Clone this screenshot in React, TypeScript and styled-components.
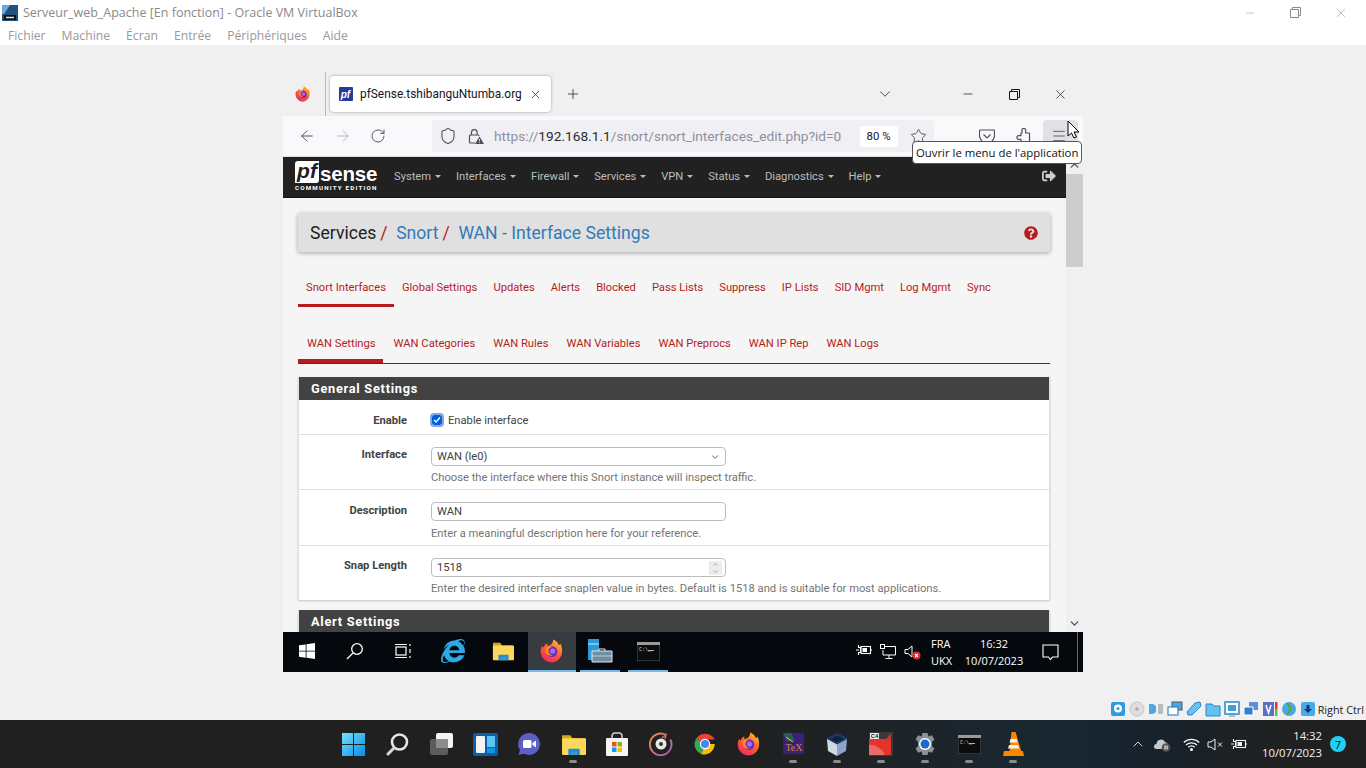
import styled, { createGlobalStyle } from 'styled-components'
import { ArrowLeft, ArrowRight, ChevronDown, ChevronUp, Menu, Minus, Plus, RotateCw, Shield, Star, X } from 'lucide-react'
import { FaSignOutAlt, FaQuestionCircle, FaInternetExplorer } from 'react-icons/fa'

const GlobalStyle = createGlobalStyle`
  html, body { margin: 0; padding: 0; }
  body { background: #f0f0f0; font-family: Roboto, "Liberation Sans", sans-serif; overflow: hidden; }
  * { box-sizing: border-box; }
`

const Screen = styled.div`
  width: 1366px;
  height: 768px;
  display: flex;
  flex-direction: column;
  position: relative;
  overflow: hidden;
`

/* ---- VirtualBox window chrome ---- */
const TitleBar = styled.div`
  height: 23px;
  padding: 2px 0 0 2px;
  background: #fff;
  display: flex;
  align-items: center;
  gap: 5px;
  color: #8a8a8a;
  font: 12.5px "Open Sans", "Noto Sans", sans-serif;
`
const TitleText = styled.span`
  flex: 1;
  white-space: nowrap;
`
const HostControls = styled.div`
  display: flex;
  align-items: center;
  gap: 33.5px;
  padding-right: 18px;
  color: #8a8a8a;
`
const MenuBar = styled.div`
  height: 22px;
  padding: 2px 0 0 8px;
  background: #fff;
  display: flex;
  gap: 16px;
  align-items: center;
  color: #999;
  font: 12.2px "Open Sans", "Noto Sans", sans-serif;
`
const Stage = styled.div`
  flex: 1;
  display: flex;
  justify-content: center;
  padding-top: 27px;
`
const Guest = styled.div`
  width: 800px;
  height: 600px;
  display: flex;
  flex-direction: column;
  position: relative;
`
const StatusBar = styled.div`
  height: 20px;
  padding: 0 2px 2px 0;
  display: flex;
  justify-content: flex-end;
  align-items: center;
  gap: 3px;
  font: 10.8px "Open Sans", "Noto Sans", sans-serif;
  color: #222;
`
const StatusLabel = styled.span`
  margin-left: -1px;
  white-space: nowrap;
`

/* ---- Firefox ---- */
const TabStrip = styled.div`
  height: 44px;
  background: #f0f0f0;
  display: flex;
  align-items: center;
  padding: 0 15px 0 12px;
  color: #3a3a3e;
`
const TabDivider = styled.div`
  width: 1px;
  height: 44px;
  background: #b9b9bd;
  margin: 0 4px 0 14px;
`
const Tab = styled.div`
  width: 221px;
  height: 36px;
  background: #fff;
  border-radius: 4px;
  box-shadow: 0 0 3px rgba(0, 0, 0, 0.35);
  display: flex;
  align-items: center;
  padding: 0 9px 0 9px;
  font-size: 11.9px;
  color: #15141a;
`
const TabTitle = styled.span`
  flex: 1;
  margin-left: 7px;
  margin-right: 6px;
  white-space: nowrap;
`
const TabPlus = styled.span`
  display: flex;
  margin-left: 14px;
  flex: 1;
`
const WinControls = styled.div`
  display: flex;
  align-items: center;
  gap: 33.5px;
  color: #15141a;
`
const DropChevron = styled.span`
  display: flex;
  margin-right: 67.5px;
`
const NavBar = styled.div`
  height: 41px;
  background: #f9f9fb;
  display: flex;
  align-items: center;
  padding: 0 5px 0 15px;
  gap: 18px;
  color: #4f4f59;
  border-bottom: 1px solid #e0e0e2;
`
const UrlBar = styled.div`
  width: 502px;
  height: 32px;
  margin-left: 28px;
  background: #f0f0f4;
  border-radius: 4px;
  display: flex;
  align-items: center;
  padding: 0 7.5px 0 7px;
  gap: 9px;
`
const UrlLock = styled.span`
  display: flex;
  margin: 0 1px 0 2px;
`
const Url = styled.span`
  flex: 1;
  font-size: 13.7px;
  color: #8f8f9d;
  white-space: nowrap;
`
const UrlHost = styled.span`
  color: #2b2a33;
`
const ZoomBadge = styled.span`
  flex: none;
  width: 38px;
  height: 21px;
  background: #fff;
  border-radius: 3px;
  display: flex;
  align-items: center;
  justify-content: center;
  font-size: 11.4px;
  color: #15141a;
  margin-right: 3px;
`
const NavRight = styled.div`
  margin-left: 27px;
  display: flex;
  align-items: center;
  gap: 20px;
  height: 32px;
`
const MenuButton = styled.span`
  width: 35px;
  height: 32px;
  margin-left: -8px;
  padding-right: 3px;
  background: #e0e0e6;
  border-radius: 4px;
  display: flex;
  align-items: center;
  justify-content: center;
`
const Tooltip = styled.div`
  position: absolute;
  left: 629px;
  top: 69px;
  height: 23px;
  padding: 0 3px;
  background: #fff;
  border: 1px solid #555;
  border-radius: 4px;
  font: 11.35px "Open Sans", "Noto Sans", sans-serif;
  color: #111;
  display: flex;
  align-items: center;
  white-space: nowrap;
  z-index: 5;
`
const Cursor = styled.svg`
  position: absolute;
  left: 784px;
  top: 48px;
  z-index: 6;
`

/* ---- pfSense page ---- */
const Viewport = styled.div`
  height: 475px;
  display: flex;
  overflow: hidden;
`
const Page = styled.div`
  flex: 1;
  background: #f5f5f5;
  overflow: hidden;
`
const Scrollbar = styled.div`
  width: 17px;
  background: #f0f0f0;
  display: flex;
  flex-direction: column;
  align-items: center;
  justify-content: space-between;
  color: #505050;
  position: relative;
`
const ScrollThumb = styled.div`
  position: absolute;
  left: 0;
  top: 17px;
  width: 17px;
  height: 93px;
  background: #cdcdcd;
`
const ScrollArrow = styled.span`
  height: 17px;
  display: flex;
  align-items: center;
`
const TopNav = styled.div`
  height: 41px;
  padding: 0 10px 2px 12px;
  background: #212121;
  display: flex;
  align-items: center;
  color: #bdbdbd;
  font-size: 11.2px;
  border-bottom: 1px solid #111;
`
const Logo = styled.div`
  width: 84px;
  margin-right: 15px;
  display: flex;
  flex-direction: column;
  color: #fff;
`
const LogoTop = styled.div`
  display: flex;
  align-items: flex-end;
  height: 22px;
`
const LogoPf = styled.span`
  background: #fff;
  color: #212121;
  width: 24px;
  height: 22px;
  border-radius: 3px 0 3px 0;
  font: italic 700 21px/20px "Liberation Sans", sans-serif;
  text-align: center;
`
const LogoSense = styled.span`
  font: 700 20.500px/19px "Liberation Sans", sans-serif;
  margin-left: 1px;
  letter-spacing: -0.2px;
`
const LogoSub = styled.span`
  font: 700 6.2px/8px Roboto, sans-serif;
  letter-spacing: 1.2px;
  white-space: nowrap;
  margin-top: 1px;
`
const NavItems = styled.div`
  flex: 1;
  display: flex;
  gap: 14.8px;
`
const NavItem = styled.span`
  display: flex;
  align-items: center;
  gap: 4px;
  white-space: nowrap;
  &::after {
    content: '';
    border-top: 3px solid #bdbdbd;
    border-left: 3px solid transparent;
    border-right: 3px solid transparent;
    margin-top: 1px;
  }
`
const Body = styled.div`
  padding: 15px 16px 0 15px;
`
const Heading = styled.div`
  height: 39px;
  background: #e0e0e0;
  border-radius: 2px;
  box-shadow: 0 1px 4px rgba(0, 0, 0, 0.35);
  display: flex;
  align-items: center;
  padding: 0 12px;
  font-size: 17.6px;
  color: #212121;
  white-space: nowrap;
`
const Crumb = styled.span`
  color: #337ab7;
  margin-left: 8.6px;
`
const Slash = styled.span`
  color: #b71c1c;
  margin-left: 4px;
`
const HelpIcon = styled.span`
  margin-left: auto;
  display: flex;
  color: #b71c1c;
`
const TabRow = styled.div<{ $top: number; $line?: boolean }>`
  display: flex;
  margin-top: ${p => p.$top}px;
  height: 37px;
  border-bottom: ${p => (p.$line ? '1px solid #7a1a1a' : 'none')};
`
const TabLink = styled.span<{ $active?: boolean; $pad: number; $bar: number }>`
  padding: 0 ${p => p.$pad}px;
  display: flex;
  align-items: center;
  font-size: 11.2px;
  color: #b71c1c;
  white-space: nowrap;
  border-bottom: ${p => p.$bar}px solid ${p => (p.$active ? '#b71c1c' : 'transparent')};
  border-top-right-radius: 2px;
`
const WanFirstTab = styled(TabLink)`
  padding-right: ${p => p.$pad - 2}px;
  margin-right: 2px;
`
const Panel = styled.section<{ $top: number }>`
  margin-top: ${p => p.$top}px;
  background: #fff;
  box-shadow: 0 1px 2px rgba(0, 0, 0, 0.2);
  border-left: 1px solid #e0e0e0;
  border-right: 1px solid #e0e0e0;
`
const PanelTitle = styled.h2`
  margin: 0;
  height: 23px;
  background: #424242;
  color: #fff;
  font-size: 12.8px;
  font-weight: 700;
  letter-spacing: 0.72px;
  display: flex;
  align-items: center;
  padding-left: 12px;
`
const FormRow = styled.div<{ $h: number }>`
  height: ${p => p.$h}px;
  display: grid;
  grid-template-columns: 108px 294px;
  column-gap: 24px;
  align-items: start;
  border-bottom: 1px solid #e0e0e0;
  &:last-child { border-bottom: none; }
`
const Label = styled.label<{ $top: number }>`
  padding-top: ${p => p.$top}px;
  font-size: 11.2px;
  font-weight: 700;
  color: #424242;
  text-align: right;
`
const Field = styled.div<{ $top: number }>`
  padding-top: ${p => p.$top}px;
  font-size: 11.2px;
  color: #424242;
`
const CheckLine = styled.div`
  display: flex;
  align-items: center;
  gap: 6px;
  font-size: 11.2px;
  height: 16px;
  margin-left: 1px;
`
const CheckBox = styled.span`
  width: 10px;
  height: 10px;
  background: #0060df;
  border-radius: 2px;
  outline: 2px solid #7fa8e8;
  display: flex;
  align-items: center;
  justify-content: center;
`
const Control = styled.div`
  width: 295px;
  height: 19px;
  border: 1px solid #bdbdbd;
  border-radius: 4px;
  background: #fff;
  display: flex;
  align-items: center;
  justify-content: space-between;
  padding: 0 5px;
  font-size: 11.2px;
  color: #424242;
`
const Spinner = styled.span`
  width: 13px;
  height: 14px;
  margin-right: -2px;
  background: #ececec;
  display: flex;
  flex-direction: column;
  align-items: center;
  color: #777;
`
const Help = styled.p<{ $gap?: number }>`
  margin: ${p => p.$gap ?? 5}px 0 0;
  font-size: 11.2px;
  line-height: 13px;
  color: #757575;
  white-space: nowrap;
  width: 620px;
`

/* ---- Windows taskbars ---- */
const GuestTaskbar = styled.div`
  height: 40px;
  background: #05090e;
  display: flex;
  align-items: center;
  color: #fff;
`
const GuestSlot = styled.span<{ $w: number; $active?: boolean; $run?: boolean }>`
  width: ${p => p.$w}px;
  height: 40px;
  display: flex;
  align-items: center;
  justify-content: center;
  background: ${p => (p.$active ? '#383b40' : 'transparent')};
  border-bottom: 2px solid ${p => (p.$run ? '#76b9ed' : 'transparent')};
  margin: 0 ${p => (p.$active ? 0 : p.$run ? 4 : 0)}px;
`
const GuestTray = styled.div`
  margin-left: auto;
  display: flex;
  align-items: center;
  font: 11px "Open Sans", "Noto Sans", sans-serif;
  color: #fff;
  height: 40px;
`
const TrayIcons = styled.span`
  display: flex;
  gap: 8px;
  margin-right: 10px;
`
const TwoLines = styled.span<{ $align: string; $w: number }>`
  display: flex;
  flex-direction: column;
  gap: 1px;
  line-height: 16px;
  text-align: ${p => p.$align};
  width: ${p => p.$w}px;
  white-space: nowrap;
`
const NotifySlot = styled.span`
  display: flex;
  margin: 0 18px 0 17px;
`
const ShowDesktop = styled.span`
  width: 1px;
  height: 40px;
  background: #666a70;
  margin-right: 5px;
`
const HostTaskbar = styled.div`
  height: 48px;
  background: linear-gradient(90deg, #202020 0, #202020 55%, #1a2832 78%, #17222b 84%, #202020 94%);
  display: grid;
  grid-template-columns: 1fr auto 1fr;
  align-items: center;
  color: #fff;
`
const HostApps = styled.div`
  grid-column: 2;
  display: flex;
`
const HostSlot = styled.span<{ $run?: boolean }>`
  width: 44px;
  height: 48px;
  display: flex;
  align-items: center;
  justify-content: center;
  position: relative;
  &::after {
    content: '';
    display: ${p => (p.$run ? 'block' : 'none')};
    position: absolute;
    left: 18px;
    bottom: 5px;
    width: 8px;
    height: 3px;
    border-radius: 2px;
    background: #8b8b8b;
  }
`
const HostTray = styled.div`
  grid-column: 3;
  display: flex;
  align-items: center;
  justify-content: flex-end;
  padding-right: 44px;
  font: 11.3px "Open Sans", "Noto Sans", sans-serif;
  color: #f2f2f2;
`
const HostTrayIcons = styled.span`
  display: flex;
  align-items: center;
  gap: 7.5px;
  margin-right: 15px;
`
const WifiSlot = styled.span`
  display: flex;
  margin: 0 -0.5px 0 4.5px;
`
const HostClock = styled.span`
  display: flex;
  flex-direction: column;
  align-items: flex-end;
  line-height: 16px;
  gap: 1px;
`
const Badge = styled.span`
  position: absolute;
  right: 20px;
  bottom: 16px;
  width: 16px;
  height: 16px;
  border-radius: 50%;
  background: #1fd2f5;
  color: #111;
  font-size: 11px;
  display: flex;
  align-items: center;
  justify-content: center;
`

/* ---- drawn icons ---- */
const Firefox = ({ size, id }: { size: number; id: string }) => (
  <svg width={size} height={size} viewBox="0 0 24 24">
    <defs>
      <linearGradient id={id} x1="0.8" y1="0" x2="0.2" y2="1">
        <stop offset="0" stopColor="#ffbd2e" />
        <stop offset="0.5" stopColor="#ff5b2e" />
        <stop offset="1" stopColor="#f0246e" />
      </linearGradient>
    </defs>
    <path d="M12 23.500A11.300 11.300 0 0 1 .7 12.200c0-2.200.6-4 1.700-5.500.2 1 .6 1.700 1 2.100.6-2.300 2-3.700 4.200-4.500-.5 1-.6 1.900-.3 2.600 2.300-.6 5.200-.4 6-6.400 4 1.900 4.800 3.700 5.300 5.300 1 .2 1.400-.5 1.600-1.300 1.300 1.900 1.800 4 1.800 6.200A11.300 11.300 0 0 1 12 23.500z" fill={`url(#${id})`} />
    <circle cx="12" cy="12.600" r="5.400" fill="#6b2fc0" />
    <circle cx="12.600" cy="12" r="2.600" fill="#a56bef" />
    <path d="M6 9c2.200-1.700 4.300-1.700 6-.8-2.200.2-3.300 1.400-3.500 3-.2 2.200 1.100 4.800 4.300 5.300-3.200.9-6.500-.8-7.300-3.800C5.200 11.400 5.500 10 6 9z" fill="#ff8a1e" />
  </svg>
)

const Win11 = () => (
  <svg width="25" height="25" viewBox="0 0 25 25">
    <defs>
      <linearGradient id="w11" x1="0" y1="0" x2="1" y2="1">
        <stop offset="0" stopColor="#6fe4fb" />
        <stop offset="1" stopColor="#0a8ae6" />
      </linearGradient>
    </defs>
    <path d="M1 1h11v11H1zM13 1h11v11H13zM1 13h11v11H1zM13 13h11v11H13z" fill="url(#w11)" />
  </svg>
)
const WinSearch = () => (
  <svg width="25" height="25" viewBox="0 0 25 25" fill="none">
    <circle cx="14.500" cy="10" r="7.500" stroke="#e6e6e6" strokeWidth="2.600" />
    <path d="M9 16l-6 6" stroke="#d8d8d8" strokeWidth="3" strokeLinecap="round" />
  </svg>
)
const WinTasks = () => (
  <svg width="25" height="24" viewBox="0 0 25 24">
    <rect x="1" y="7" width="18" height="16" rx="2" fill="#5c5c5c" />
    <rect x="7" y="1" width="17" height="15" rx="2" fill="#f4f4f4" />
    <rect x="7" y="7" width="12" height="9" fill="#8c8c8c" />
  </svg>
)
const Widgets = () => (
  <svg width="25" height="23" viewBox="0 0 25 23">
    <rect width="25" height="23" rx="2" fill="#0b5fa8" />
    <rect x="3" y="3" width="9" height="17" rx="1" fill="#f2f2f2" />
    <rect x="14" y="3" width="8" height="11" fill="#5cc6f5" />
    <rect x="14" y="15" width="8" height="5" fill="#1593e0" />
  </svg>
)
const Chat = () => (
  <svg width="24" height="24" viewBox="0 0 24 24">
    <path d="M12 1a11 11 0 1 1-5 20.800L1.500 23l1.500-5A11 11 0 0 1 12 1z" fill="#5b5fc7" />
    <rect x="6" y="8" width="8.500" height="8" rx="1.500" fill="#fff" />
    <path d="M15.500 11l3.500-2.500v7L15.500 13z" fill="#fff" />
  </svg>
)
const Folder = ({ size }: { size: number }) => (
  <svg width={size} height={size} viewBox="0 0 24 24">
    <path d="M1 3h8l2 3h12v3H1z" fill="#d9a21b" />
    <rect x="1" y="6" width="23" height="16" rx="1" fill="#fbd75b" />
    <path d="M7 22v-5a1 1 0 0 1 1-1h9a1 1 0 0 1 1 1v5z" fill="#1d8fd6" />
    <path d="M9.500 22v-3h6v3z" fill="#fbd75b" opacity="0.15" />
  </svg>
)
const Store = () => (
  <svg width="24" height="25" viewBox="0 0 24 25">
    <path d="M7 7V4a3 3 0 0 1 3-3h4a3 3 0 0 1 3 3v3" fill="none" stroke="#cfcfcf" strokeWidth="1.500" />
    <rect x="1" y="6" width="22" height="18" rx="1" fill="#f5f5f5" />
    <path d="M7 10h4.500v4.500H7z" fill="#f25022" />
    <path d="M12.500 10H17v4.500h-4.500z" fill="#7fba00" />
    <path d="M7 15.500h4.500V20H7z" fill="#00a4ef" />
    <path d="M12.500 15.500H17V20h-4.500z" fill="#ffb900" />
  </svg>
)
const Disc = () => (
  <svg width="24" height="24" viewBox="0 0 24 24" fill="none">
    <defs>
      <linearGradient id="disc" x1="0" y1="0" x2="1" y2="1">
        <stop offset="0" stopColor="#f08a4b" />
        <stop offset="1" stopColor="#9c5bb5" />
      </linearGradient>
    </defs>
    <path d="M17 3a10.800 10.800 0 1 0 4.300 4.500" stroke="url(#disc)" strokeWidth="2" />
    <path d="M13 6l4-3.500L16 7" stroke="#d0703f" strokeWidth="1.500" />
    <circle cx="12" cy="12" r="5.500" fill="#e8e8e8" />
    <circle cx="12" cy="12" r="2" fill="#333" />
  </svg>
)
const Chrome = () => (
  <svg width="24" height="24" viewBox="0 0 24 24">
    <path d="M12 12L3.300 6.300A10.800 10.800 0 0 1 21.800 7.500H12z" fill="#ea4335" />
    <path d="M12 12L3.300 6.300A10.800 10.800 0 0 0 8.500 22.200z" fill="#34a853" />
    <path d="M12 12h9.800A10.800 10.800 0 0 1 8.500 22.200z" fill="#fbbc04" />
    <circle cx="12" cy="12" r="5.200" fill="#fff" />
    <circle cx="12" cy="12" r="4" fill="#4285f4" />
  </svg>
)
const Tex = () => (
  <svg width="21" height="22" viewBox="0 0 21 22">
    <rect width="21" height="21" rx="1" fill="#3c1f7d" />
    <path d="M0 0h8l4 8H4z" fill="#2e5c4a" />
    <path d="M3 4l7 5" stroke="#c8d84a" strokeWidth="1" />
    <text x="11" y="18" textAnchor="middle" fontFamily="Liberation Serif, serif" fontSize="10" fill="#d08a30">TeX</text>
  </svg>
)
const VBoxCube = () => (
  <svg width="22" height="25" viewBox="0 0 22 25">
    <path d="M11 1l10 5v6l-10 6-10-6V6z" fill="#1e3a66" />
    <path d="M11 3.500L18 7l-7 3.500L4 7z" fill="#0f2340" />
    <path d="M1 7l10 5.500V24L2 19z" fill="#d0d8e4" />
    <path d="M21 7l-10 5.500V24l9-5z" fill="#8da4c4" />
  </svg>
)
const C4 = () => (
  <svg width="24" height="24" viewBox="0 0 24 24">
    <rect width="24" height="24" fill="#3a3a3a" />
    <rect x="0" y="7" width="22" height="16" fill="#e4322c" />
    <path d="M0 23V13c6-1 9 3 13 5l3 5z" fill="#f5a09a" opacity="0.5" />
    <path d="M12 15L21 2l1 1c0 5-3 10-7 13z" fill="#e4322c" />
    <rect x="1" y="1" width="9" height="6" fill="#eee" />
    <text x="5.500" y="6.200" textAnchor="middle" fontFamily="Liberation Sans, sans-serif" fontWeight="700" fontSize="6" fill="#222">C4</text>
  </svg>
)
const Gear = () => (
  <svg width="24" height="24" viewBox="0 0 24 24">
    <path d="M9.500 1h5l1 3.400 3.400-1.100 2.500 4.300-2.500 2.500v3.800l2.500 2.500-2.500 4.300-3.400-1.100-1 3.400h-5l-1-3.400-3.400 1.100-2.500-4.300 2.500-2.500v-3.800L2.600 7.600l2.500-4.300 3.400 1.100z" fill="#8b8f96" />
    <circle cx="12" cy="12" r="6" fill="#fff" />
    <circle cx="12" cy="12" r="4.500" fill="#1b6ac9" />
  </svg>
)
const Cmd = ({ w, h }: { w: number; h: number }) => (
  <svg width={w} height={h} viewBox="0 0 23 19">
    <rect width="23" height="19" fill="#0c0c0c" stroke="#8a8a8a" strokeWidth="0.6" />
    <rect width="23" height="3" fill="#9a9a9a" />
    <text x="2" y="9" fontFamily="Liberation Mono, monospace" fontSize="5" fill="#ddd">C:\_</text>
    <path d="M11 8.500h6" stroke="#ddd" strokeWidth="0.800" />
  </svg>
)
const Vlc = () => (
  <svg width="21" height="24" viewBox="0 0 21 24">
    <path d="M8.500 0h4l6 20h-12z" fill="#ff8800" />
    <path d="M7.500 7h6l1 3.500h-8zM6 13h9l1 3.500H5z" fill="#f2f2f2" />
    <path d="M1 19h19l1 5H0z" fill="#f58a00" />
  </svg>
)
const Win10 = () => (
  <svg width="16" height="16" viewBox="0 0 16 16" fill="#fff">
    <path d="M0 2.300l6.700-.9v6.300H0zM7.500 1.300L16 0v7.700H7.500zM0 8.500h6.700v6.300L0 13.800zM7.500 8.500H16V16l-8.500-1.200z" />
  </svg>
)
const GuestSearch = () => (
  <svg width="18" height="18" viewBox="0 0 18 18" fill="none" stroke="#fff" strokeWidth="1.300">
    <circle cx="11" cy="7" r="5.300" />
    <path d="M7 11l-6 6" />
  </svg>
)
const GuestTasks = () => (
  <svg width="17" height="16" viewBox="0 0 17 16" fill="none" stroke="#fff" strokeWidth="1.200">
    <rect x="1" y="4" width="10" height="8" />
    <path d="M0 1.500h12M0 14.500h12M15 1v2M15 6v4M15 13v2" />
  </svg>
)
const ServerMgr = () => (
  <svg width="26" height="26" viewBox="0 0 26 26">
    <rect x="1" y="1" width="11" height="21" fill="#2a9ad8" />
    <path d="M1 6h11" stroke="#fff" strokeWidth="0.800" />
    <path d="M10 13h15v11H5V13z" fill="#6d8ca5" stroke="#e8e8e8" strokeWidth="1" />
    <path d="M12 13v-2h6v2" fill="none" stroke="#e8e8e8" strokeWidth="1" />
    <path d="M5 18h20" stroke="#e8e8e8" strokeWidth="0.700" />
  </svg>
)
const PlugBattery = ({ color }: { color: string }) => (
  <svg width="16" height="12" viewBox="0 0 16 12" fill="none" stroke={color} strokeWidth="1.100">
    <rect x="5" y="2.500" width="9.500" height="7" />
    <rect x="6.500" y="4" width="4.500" height="4" fill={color} stroke="none" />
    <path d="M15 5v2M0 6h3M2 3.500h2.500v5H2M2.500 1v2M2.500 9v2" />
  </svg>
)
const NetPc = () => (
  <svg width="16" height="15" viewBox="0 0 16 15" fill="none" stroke="#fff" strokeWidth="1">
    <path d="M5 2.500h10.500v8.500H3V6" />
    <rect x="0.500" y="0.500" width="4" height="4" />
    <path d="M9 11v3M5.500 14.500h7" />
  </svg>
)
const MutedSpeaker = () => (
  <svg width="17" height="16" viewBox="0 0 17 16" fill="none">
    <path d="M1 5.500h3L8 2v11L4 9.500H1z" stroke="#fff" strokeWidth="1" />
    <circle cx="12.500" cy="11.500" r="4" fill="#d92b2b" />
    <path d="M11 10l3 3M14 10l-3 3" stroke="#fff" strokeWidth="1.100" />
  </svg>
)
const Bubble = () => (
  <svg width="17" height="17" viewBox="0 0 17 17" fill="none" stroke="#fff" strokeWidth="1.100">
    <path d="M1 1h15v12h-5.500l-2 2.500-2-2.500H1z" />
  </svg>
)
const Wifi = () => (
  <svg width="17" height="13" viewBox="0 0 17 13" fill="none" stroke="#f0f0f0" strokeWidth="1.300">
    <path d="M.8 4.500a11 11 0 0 1 15.400 0M3 7a8 8 0 0 1 11 0M5.300 9.300a4.500 4.500 0 0 1 6.400 0" />
    <circle cx="8.500" cy="11.500" r="0.900" fill="#f0f0f0" />
  </svg>
)
const Cloud = () => (
  <svg width="17" height="15" viewBox="0 0 17 15">
    <path d="M2.500 12a2.500 2.500 0 0 1 0-5 4.500 4.500 0 0 1 8.500-2 3.500 3.500 0 0 1 3 3v4z" fill="#c8c8c8" />
    <circle cx="12" cy="10.500" r="4.300" fill="#555" />
    <path d="M11 8.500v4M13 8.500v4" stroke="#fff" strokeWidth="1" />
  </svg>
)
const SpeakerX = () => (
  <svg width="17" height="13" viewBox="0 0 17 13" fill="none" stroke="#f0f0f0" strokeWidth="1">
    <path d="M1 4h3l4-3v11L4 9H1zM11 4.500l4 4M15 4.500l-4 4" />
  </svg>
)
const Pocket = () => (
  <svg width="16" height="15" viewBox="0 0 16 15" fill="none" stroke="#4f4f59" strokeWidth="1.200">
    <path d="M1.500 1h13a1 1 0 0 1 1 1v4.500a7.500 7.500 0 0 1-15 0V2a1 1 0 0 1 .9-1z" />
    <path d="M4.500 5.500L8 9l3.500-3.500" />
  </svg>
)
const PuzzlePiece = () => (
  <svg width="16" height="16" viewBox="0 0 16 16" fill="none" stroke="#4f4f59" strokeWidth="1.200" strokeLinejoin="round">
    <path d="M7 5V3.200a2 2 0 1 1 3.600 0V5H14.500v9.500H6v-3.200H4.200a1.900 1.900 0 1 1 0-3.700H6V5z" />
  </svg>
)
const WarnLock = () => (
  <svg width="16" height="16" viewBox="0 0 16 16" fill="none" stroke="#4f4f59" strokeWidth="1.200">
    <path d="M7 15H2.500a1 1 0 0 1-1-1V8a1 1 0 0 1 1-1h7.500a1 1 0 0 1 1 .8" />
    <path d="M3.500 7V4.500a2.800 2.800 0 0 1 5.600 0V7" />
    <path d="M11.500 8.500l4.500 7.500H7z" fill="#4f4f59" stroke="none" />
    <path d="M11.500 11v2.200M11.500 14v.8" stroke="#f0f0f4" strokeWidth="0.900" />
  </svg>
)

const Mini = ({ kind }: { kind: number }) => {
  const shapes = [
    <><rect x="1" y="1" width="14" height="14" rx="2" fill="#2f9be0" /><circle cx="8" cy="7.500" r="4" fill="#fff" /><circle cx="8" cy="7.500" r="1.500" fill="#2f9be0" /></>,
    <><circle cx="8" cy="8" r="7" fill="#dedede" stroke="#c4c4c4" /><circle cx="8" cy="8" r="1.800" fill="#aaa" /></>,
    <><path d="M1 3h4l3 2v6l-3 2H1z" fill="#4aa8e8" /><path d="M10 3h5v10h-5z" fill="#bbb" /></>,
    <><rect x="5" y="1" width="10" height="8" fill="#4aa8e8" stroke="#555" /><rect x="1" y="6" width="10" height="8" fill="#fff" stroke="#1c75bc" /></>,
    <><path d="M2 14l-1-3 8-9 5-1 1 4-9 9z" fill="#6cc0f2" stroke="#2a86c8" /></>,
    <><path d="M1 3h6l2 2h6v10H1z" fill="#63c1f3" stroke="#2a86c8" /></>,
    <><rect x="1" y="1" width="14" height="12" fill="#fff" stroke="#2a86c8" strokeWidth="1.500" /><rect x="4" y="4" width="8" height="6" fill="#39a0e6" /><path d="M5 15h6" stroke="#888" /></>,
    <><rect x="6" y="1" width="9" height="8" fill="#5b8fd8" /><rect x="1" y="6" width="9" height="8" fill="#2f7fd0" stroke="#fff" /></>,
    <><rect x="1" y="1" width="11" height="14" fill="#5b6fc8" /><path d="M4 4l2.500 8L9 4" stroke="#fff" fill="none" strokeWidth="1.500" /><rect x="13" y="1" width="2.500" height="7" fill="#e33" /><rect x="13" y="8" width="2.500" height="7" fill="#4c4" /></>,
    <><circle cx="8" cy="8" r="7" fill="#4aa8e8" /><path d="M6 2l5 6-5 6 3-6z" fill="#7ed321" stroke="#5aa010" /></>,
    <><rect x="1" y="1" width="14" height="14" rx="2" fill="#4aa8e8" /><path d="M8 12L4 8h2.500V4h3v4H12z" fill="#0c3c78" /></>,
  ]
  return <svg width="16" height="16" viewBox="0 0 16 16">{shapes[kind]}</svg>
}

const TopItems = ['System', 'Interfaces', 'Firewall', 'Services', 'VPN', 'Status', 'Diagnostics', 'Help']
const MainTabs = ['Snort Interfaces', 'Global Settings', 'Updates', 'Alerts', 'Blocked', 'Pass Lists', 'Suppress', 'IP Lists', 'SID Mgmt', 'Log Mgmt', 'Sync']
const WanTabs = ['WAN Categories', 'WAN Rules', 'WAN Variables', 'WAN Preprocs', 'WAN IP Rep', 'WAN Logs']

const App = () => {
  return (
    <>
      <GlobalStyle />
      <Screen>
        <TitleBar>
          <svg width="16" height="16" viewBox="0 0 16 16">
            <rect width="16" height="16" fill="#24507f" />
            <path d="M0 0h8L2 9H0z" fill="#6fa8d8" />
            <rect x="2" y="10" width="12" height="5" fill="#111" />
            <path d="M4 12.500h8" stroke="#e8e8e8" strokeWidth="1.500" />
          </svg>
          <TitleText>Serveur_web_Apache [En fonction] - Oracle VM VirtualBox</TitleText>
          <HostControls>
            <Minus size={12} strokeWidth={1} />
            <svg width="11" height="11" viewBox="0 0 11 11" fill="none" stroke="#8a8a8a">
              <path d="M.5 2.500h8v8h-8zM2.500 2.500v-2h8v8h-2" />
            </svg>
            <X size={14} strokeWidth={1} />
          </HostControls>
        </TitleBar>
        <MenuBar>
          <span>Fichier</span>
          <span>Machine</span>
          <span>Écran</span>
          <span>Entrée</span>
          <span>Périphériques</span>
          <span>Aide</span>
        </MenuBar>
        <Stage>
          <Guest>
            <TabStrip>
              <Firefox size={16} id="ffTab" />
              <TabDivider />
              <Tab>
                <svg width="14" height="14" viewBox="0 0 14 14">
                  <rect width="14" height="14" rx="1" fill="#1f3b9b" />
                  <text x="6.500" y="11" textAnchor="middle" fontFamily="Liberation Sans, sans-serif" fontStyle="italic" fontWeight="700" fontSize="10" fill="#fff">pf</text>
                </svg>
                <TabTitle>pfSense.tshibanguNtumba.org</TabTitle>
                <X size={13} strokeWidth={1.3} />
              </Tab>
              <TabPlus>
                <Plus size={16} strokeWidth={1.3} />
              </TabPlus>
              <DropChevron>
                <ChevronDown size={18} strokeWidth={1.2} />
              </DropChevron>
              <WinControls>
                <Minus size={14} strokeWidth={1.2} />
                <svg width="11" height="11" viewBox="0 0 11 11" fill="none" stroke="#15141a">
                  <path d="M.5 2.500h8v8h-8zM2.500 2.500v-2h8v8h-2" />
                </svg>
                <X size={15} strokeWidth={1.1} />
              </WinControls>
            </TabStrip>
            <NavBar>
              <ArrowLeft size={18} strokeWidth={1.3} />
              <ArrowRight size={18} strokeWidth={1.3} color="#b5b5bb" />
              <RotateCw size={16} strokeWidth={1.4} />
              <UrlBar>
                <Shield size={18} strokeWidth={1.4} />
                <UrlLock><WarnLock /></UrlLock>
                <Url>
                  https://<UrlHost>192.168.1.1</UrlHost>/snort/snort_interfaces_edit.php?id=0
                </Url>
                <ZoomBadge>80 %</ZoomBadge>
                <Star size={17} strokeWidth={1.3} />
              </UrlBar>
              <NavRight>
                <Pocket />
                <PuzzlePiece />
                <MenuButton>
                  <Menu size={16} strokeWidth={1.3} />
                </MenuButton>
              </NavRight>
            </NavBar>
            <Viewport>
              <Page>
                <TopNav>
                  <Logo>
                    <LogoTop>
                      <LogoPf>pf</LogoPf>
                      <LogoSense>sense</LogoSense>
                    </LogoTop>
                    <LogoSub>COMMUNITY EDITION</LogoSub>
                  </Logo>
                  <NavItems>
                    {TopItems.map(t => (
                      <NavItem key={t}>{t}</NavItem>
                    ))}
                  </NavItems>
                  <FaSignOutAlt size={14} color="#cfcfcf" />
                </TopNav>
                <Body>
                  <Heading>
                    Services<Slash>/</Slash>
                    <Crumb>Snort</Crumb>
                    <Slash>/</Slash>
                    <Crumb>WAN - Interface Settings</Crumb>
                    <HelpIcon>
                      <FaQuestionCircle size={14} />
                    </HelpIcon>
                  </Heading>
                  <TabRow $top={18}>
                    {MainTabs.map((t, i) => (
                      <TabLink key={t} $active={i === 0} $pad={8} $bar={3}>
                        {t}
                      </TabLink>
                    ))}
                  </TabRow>
                  <TabRow $top={20} $line>
                    <WanFirstTab $active $pad={9} $bar={4}>WAN Settings</WanFirstTab>
                    {WanTabs.map(t => (
                      <TabLink key={t} $pad={9} $bar={4}>
                        {t}
                      </TabLink>
                    ))}
                  </TabRow>
                  <Panel $top={13}>
                    <PanelTitle>General Settings</PanelTitle>
                    <FormRow $h={35}>
                      <Label $top={14}>Enable</Label>
                      <Field $top={12}>
                        <CheckLine>
                          <CheckBox>
                            <svg width="8" height="8" viewBox="0 0 8 8" fill="none" stroke="#fff" strokeWidth="1.300">
                              <path d="M1 4l2 2 4-4.500" />
                            </svg>
                          </CheckBox>
                          Enable interface
                        </CheckLine>
                      </Field>
                    </FormRow>
                    <FormRow $h={55}>
                      <Label $top={13}>Interface</Label>
                      <Field $top={12}>
                        <Control>
                          WAN (le0)
                          <ChevronDown size={10} strokeWidth={2} />
                        </Control>
                        <Help>Choose the interface where this Snort instance will inspect traffic.</Help>
                      </Field>
                    </FormRow>
                    <FormRow $h={56}>
                      <Label $top={14}>Description</Label>
                      <Field $top={12}>
                        <Control>WAN</Control>
                        <Help $gap={6}>Enter a meaningful description here for your reference.</Help>
                      </Field>
                    </FormRow>
                    <FormRow $h={54}>
                      <Label $top={13}>Snap Length</Label>
                      <Field $top={12}>
                        <Control>
                          1518
                          <Spinner>
                            <ChevronUp size={7} strokeWidth={2} />
                            <ChevronDown size={7} strokeWidth={2} />
                          </Spinner>
                        </Control>
                        <Help>Enter the desired interface snaplen value in bytes. Default is 1518 and is suitable for most applications.</Help>
                      </Field>
                    </FormRow>
                  </Panel>
                  <Panel $top={10}>
                    <PanelTitle>Alert Settings</PanelTitle>
                  </Panel>
                </Body>
              </Page>
              <Scrollbar>
                <ScrollThumb />
                <ScrollArrow>
                  <ChevronUp size={13} strokeWidth={2.500} />
                </ScrollArrow>
                <ScrollArrow>
                  <ChevronDown size={13} strokeWidth={2.500} />
                </ScrollArrow>
              </Scrollbar>
            </Viewport>
            <GuestTaskbar>
              <GuestSlot $w={48}><Win10 /></GuestSlot>
              <GuestSlot $w={48}><GuestSearch /></GuestSlot>
              <GuestSlot $w={48}><GuestTasks /></GuestSlot>
              <GuestSlot $w={51}>
                <FaInternetExplorer size={24} color="#2fa8e6" />
              </GuestSlot>
              <GuestSlot $w={50}><Folder size={22} /></GuestSlot>
              <GuestSlot $w={48} $active $run><Firefox size={24} id="ffGuest" /></GuestSlot>
              <GuestSlot $w={40} $run><ServerMgr /></GuestSlot>
              <GuestSlot $w={40} $run><Cmd w={23} h={19} /></GuestSlot>
              <GuestTray>
                <TrayIcons>
                  <PlugBattery color="#fff" />
                  <NetPc />
                  <MutedSpeaker />
                </TrayIcons>
                <TwoLines $align="left" $w={32}>
                  <span>FRA</span>
                  <span>UKX</span>
                </TwoLines>
                <TwoLines $align="center" $w={62}>
                  <span>16:32</span>
                  <span>10/07/2023</span>
                </TwoLines>
                <NotifySlot><Bubble /></NotifySlot>
                <ShowDesktop />
              </GuestTray>
            </GuestTaskbar>
            <Tooltip>Ouvrir le menu de l'application</Tooltip>
            <Cursor width="13" height="19" viewBox="0 0 13 19">
              <path d="M1 1v15l3.500-3 2.500 5 2.500-1-2.500-5H12z" fill="#fff" stroke="#000" strokeWidth="1" />
            </Cursor>
          </Guest>
        </Stage>
        <StatusBar>
          {[0, 1, 2, 3, 4, 5, 6, 7, 8, 9, 10].map(k => (
            <Mini key={k} kind={k} />
          ))}
          <StatusLabel>Right Ctrl</StatusLabel>
        </StatusBar>
        <HostTaskbar>
          <HostApps>
            <HostSlot><Win11 /></HostSlot>
            <HostSlot><WinSearch /></HostSlot>
            <HostSlot><WinTasks /></HostSlot>
            <HostSlot><Widgets /></HostSlot>
            <HostSlot><Chat /></HostSlot>
            <HostSlot $run><Folder size={25} /></HostSlot>
            <HostSlot><Store /></HostSlot>
            <HostSlot><Disc /></HostSlot>
            <HostSlot><Chrome /></HostSlot>
            <HostSlot><Firefox size={24} id="ffHost" /></HostSlot>
            <HostSlot $run><Tex /></HostSlot>
            <HostSlot $run><VBoxCube /></HostSlot>
            <HostSlot $run><C4 /></HostSlot>
            <HostSlot $run><Gear /></HostSlot>
            <HostSlot $run><Cmd w={23} h={19} /></HostSlot>
            <HostSlot $run><Vlc /></HostSlot>
          </HostApps>
          <HostTray>
            <HostTrayIcons>
              <ChevronUp size={16} strokeWidth={1.300} />
              <Cloud />
              <WifiSlot><Wifi /></WifiSlot>
              <SpeakerX />
              <PlugBattery color="#f0f0f0" />
            </HostTrayIcons>
            <HostClock>
              <span>14:32</span>
              <span>10/07/2023</span>
            </HostClock>
            <Badge>7</Badge>
          </HostTray>
        </HostTaskbar>
      </Screen>
    </>
  )
}

export default App
